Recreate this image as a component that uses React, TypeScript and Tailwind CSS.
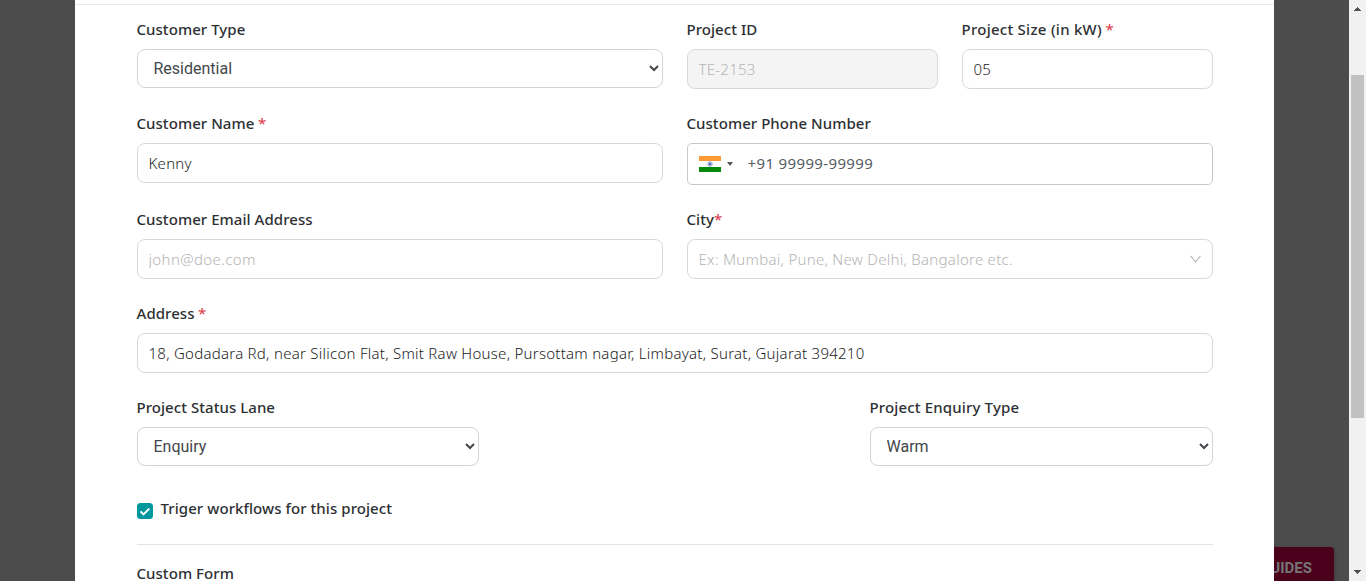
import type { ReactNode } from "react";

const inputBase =
  "block h-10 w-full rounded-[8px] border border-[#d9d9d9] bg-white px-[10.5px] font-['Noto_Sans',sans-serif] text-[15px] font-light tracking-[0.26px] text-[#1c1c1c] outline-none placeholder:text-[#b4b4b4]";

type LabelProps = { children: ReactNode; required?: boolean; tight?: boolean; tracking?: string };

function Label({ children, required, tight, tracking = "tracking-[0.05px]" }: LabelProps) {
  return (
    <label className={`-ml-[0.5px] block h-[30px] whitespace-nowrap text-[15px] leading-[20px] font-medium text-[#2d3033] ${tracking}`}>
      {children}
      {required && <span className={tight ? "font-normal text-[#dc3545]" : "ml-[3.5px] font-normal text-[#dc3545]"}>*</span>}
    </label>
  );
}

function Field({ label, children, ...rest }: LabelProps & { label: string }) {
  return (
    <div>
      <Label {...rest}>{label}</Label>
      {children}
    </div>
  );
}

function Select({ options }: { options: string[] }) {
  return (
    <select className="block h-[39px] w-full rounded-[8px] border border-[#ced4da] bg-white pl-[11.5px] font-['Roboto',sans-serif] text-base text-[#43474b] outline-none">
      {options.map((option) => (
        <option key={option}>{option}</option>
      ))}
    </select>
  );
}

function IndiaFlag() {
  return (
    <svg width="22" height="16" viewBox="0 0 22 16">
      <rect width="22" height="16" fill="#fff" />
      <rect width="22" height="5" fill="#ff9933" />
      <rect y="11" width="22" height="5" fill="#088a08" />
      <circle cx="11" cy="8" r="2.3" fill="#c5cde6" stroke="#8c9bc9" strokeWidth="0.8" />
      <circle cx="11" cy="8" r="1.1" fill="#3f57a3" />
    </svg>
  );
}

function Scrollbar() {
  return (
    <div className="flex w-[17px] shrink-0 flex-col items-center bg-[#f1f1f1]">
      <svg width="17" height="17" viewBox="0 0 17 17" shapeRendering="crispEdges">
        <path d="M5 11h7v-1h-1v-1h-1v-1h-1v-1h-1v1h-1v1h-1v1h-1z" fill="#505050" />
      </svg>
      <div className="mt-[58px] h-[343px] w-[13px] bg-[#c1c1c1]" />
      <svg className="mt-auto" width="17" height="17" viewBox="0 0 17 17" shapeRendering="crispEdges">
        <path d="M5 6h7v1h-1v1h-1v1h-1v1h-1v-1h-1v-1h-1v-1h-1z" fill="#505050" />
      </svg>
    </div>
  );
}

export default function App() {
  return (
    <div className="flex h-[581px] w-full overflow-hidden bg-[#4c4c4c] font-['Noto_Sans',sans-serif]">
      <div className="w-[75px] shrink-0" />
      <main className="w-[1199px] shrink-0 overflow-hidden bg-white">
        <div className="h-[5px] border-b border-[#e9e9e9]" />
        <form className="flex w-[1138px] flex-col gap-6 pt-[14px] pl-[62px]">
          <div className="grid grid-cols-[526px_251px_251px] gap-x-6">
            <Field label="Customer Type">
              <Select options={["Residential"]} />
            </Field>
            <Field label="Project ID">
              <input className={`${inputBase} disabled:bg-[#f4f4f4] disabled:text-[#b4b4b4]`} disabled defaultValue="TE-2153" />
            </Field>
            <Field label="Project Size (in kW)" required tracking="tracking-[0.26px]">
              <input className={inputBase} defaultValue="05" />
            </Field>
          </div>

          <div className="grid grid-cols-2 gap-x-6">
            <Field label="Customer Name" required>
              <input className={inputBase} defaultValue="Kenny" />
            </Field>
            <Field label="Customer Phone Number">
              <div className="flex h-[42px] items-center rounded-[5px] border border-[#c8c8c8] pl-[11px]">
                <IndiaFlag />
                <svg className="ml-[6px]" width="6" height="4" viewBox="0 0 6 4">
                  <path d="M0 0h6L3 4z" fill="#555" />
                </svg>
                <input
                  className="ml-[14.5px] w-[400px] bg-transparent pb-[2px] text-[15px] tracking-[0.36px] text-[#565d64] outline-none"
                  defaultValue="+91 99999-99999"
                />
              </div>
            </Field>
          </div>

          <div className="grid grid-cols-2 gap-x-6">
            <Field label="Customer Email Address">
              <input className="block h-10 w-full rounded-[8px] border border-[#d9d9d9] bg-white px-[10.5px] text-[15px] font-light tracking-[0.37px] text-[#1c1c1c] outline-none placeholder:text-[#b4b4b4]" placeholder="john@doe.com" />
            </Field>
            <Field label="City" required tight>
              <div className="flex h-10 items-center justify-between rounded-[8px] border border-[#d9d9d9] pr-[11px] pl-[10.5px] text-[15px] font-light tracking-[0.27px] text-[#b4b4b4]">
                <span>Ex: Mumbai, Pune, New Delhi, Bangalore etc.</span>
                <svg width="11" height="8" viewBox="0 0 11 8" fill="none" stroke="#b8b8b8" strokeWidth="1.1">
                  <path d="M.5.8l5 6 5-6" />
                </svg>
              </div>
            </Field>
          </div>

          <Field label="Address" required>
            <input
              className={inputBase}
              defaultValue="18, Godadara Rd, near Silicon Flat, Smit Raw House, Pursottam nagar, Limbayat, Surat, Gujarat 394210"
            />
          </Field>

          <div className="grid grid-cols-[342px_343px] justify-between">
            <Field label="Project Status Lane">
              <Select options={["Enquiry"]} />
            </Field>
            <Field label="Project Enquiry Type" tracking="tracking-[0.15px]">
              <Select options={["Warm"]} />
            </Field>
          </div>

          <div className="mt-2 flex h-[22px] items-start">
            <svg className="mt-[5px] shrink-0" width="16" height="16" viewBox="0 0 16 16">
              <rect width="16" height="16" rx="3.5" fill="#00979d" />
              <path d="M3.5 8.4l3 3L12.3 5.6" fill="none" stroke="#fff" strokeWidth="2" />
            </svg>
            <span className="ml-[7.5px] whitespace-nowrap text-[15px] leading-[20px] font-medium tracking-[0.07px] text-[#2d3033]">
              Triger workflows for this project
            </span>
          </div>

          <hr className="border-[#e4e4e4]" />

          <div className="-mt-[6px]">
            <Label>Custom Form</Label>
          </div>
        </form>
      </main>
      <aside className="flex min-w-0 flex-1 flex-col items-end justify-end overflow-hidden pr-[15px]">
        <div className="flex h-[34px] w-[110px] shrink-0 items-center justify-end rounded-t-[4px] bg-[#4b001c] pt-[9px] pr-[22px] font-['Roboto',sans-serif] text-[15px] font-bold text-[#757575] shadow-[0_2px_5px_rgba(0,0,0,0.3)]">
          GUIDES
        </div>
      </aside>
      <Scrollbar />
    </div>
  );
}
